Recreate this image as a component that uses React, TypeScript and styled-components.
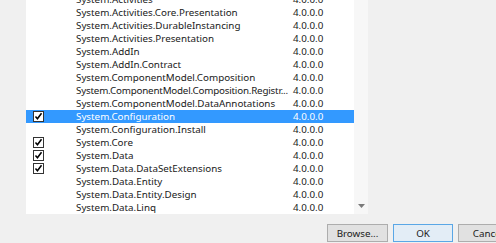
import React, { useLayoutEffect, useRef } from "react";
import styled, { createGlobalStyle } from "styled-components";

const GlobalStyle = createGlobalStyle`
  html, body {
    margin: 0;
    padding: 0;
    width: 496px;
    height: 243px;
    overflow: hidden;
    background: #f0f0f0;
    font-family: "Noto Sans", "Segoe UI", sans-serif;
  }
`;

const Page = styled.div`
  width: 496px;
  height: 243px;
  display: flex;
  flex-direction: column;
  background: #f0f0f0;
`;

const ListArea = styled.div`
  display: flex;
  padding-left: 26px;
`;

const ListBox = styled.div`
  width: 342px;
  height: 214px;
  background: #ffffff;
  display: flex;
`;

const Rows = styled.div`
  width: 328px;
  height: 214px;
  overflow: hidden;
`;

const Row = styled.div<{ $selected?: boolean }>`
  height: 13px;
  display: flex;
  align-items: center;
  background: ${(p) => (p.$selected ? "#3399ff" : "transparent")};
  color: ${(p) => (p.$selected ? "#ffffff" : "#1a1a1a")};
  font-size: 9.8px;
  line-height: 13px;
  white-space: nowrap;
`;

const CheckCell = styled.div`
  width: 50px;
  height: 13px;
  display: flex;
  align-items: center;
  padding-left: 7px;
  box-sizing: border-box;
`;

const Box = styled.div`
  width: 11px;
  height: 11px;
  box-sizing: border-box;
  border: 1px solid #333333;
  background: #ffffff;
  display: flex;
  align-items: center;
  justify-content: center;
`;

const NameCell = styled.div<{ $condensed?: boolean }>`
  width: 217px;
  overflow: hidden;
  letter-spacing: ${(p) => (p.$condensed ? "-0.2px" : "normal")};
`;

const VersionCell = styled.div`
  flex: 1;
`;

const ScrollBar = styled.div`
  width: 14px;
  height: 214px;
  background: #f7f7f7;
  display: flex;
  flex-direction: column;
  justify-content: flex-end;
  align-items: center;
  padding-bottom: 6px;
  box-sizing: border-box;
`;

const Footer = styled.div`
  display: flex;
  gap: 5px;
  padding-left: 327px;
  padding-top: 10px;
`;

const Button = styled.div<{ $default?: boolean; $w: number }>`
  flex: none;
  width: ${(p) => p.$w}px;
  height: 18px;
  box-sizing: border-box;
  border: 1px solid ${(p) => (p.$default ? "#5aa7e6" : "#adadad")};
  background: ${(p) => (p.$default ? "#e3edf6" : "#e1e1e1")};
  display: flex;
  align-items: center;
  justify-content: center;
  font-size: 9.8px;
  color: #1a1a1a;
`;

const Check = () => (
  <svg width="11" height="11" viewBox="0 0 11 11" style={{ display: "block" }}>
    <path d="M1.8 5.6 L4.2 8.2 L9.2 1.6" fill="none" stroke="#000" strokeWidth="1.9" />
  </svg>
);

const Arrow = () => (
  <svg width="7" height="4" viewBox="0 0 7 4" style={{ display: "block" }}>
    <path d="M0 0 H7 L3.5 4 Z" fill="#7a7a7a" />
  </svg>
);

type Item = { name: string; checked?: boolean; selected?: boolean; condensed?: boolean };

const items: Item[] = [
  { name: "System.Activities" },
  { name: "System.Activities.Core.Presentation" },
  { name: "System.Activities.DurableInstancing" },
  { name: "System.Activities.Presentation" },
  { name: "System.AddIn" },
  { name: "System.AddIn.Contract" },
  { name: "System.ComponentModel.Composition" },
  { name: "System.ComponentModel.Composition.Registr...", condensed: true },
  { name: "System.ComponentModel.DataAnnotations" },
  { name: "System.Configuration", checked: true, selected: true },
  { name: "System.Configuration.Install" },
  { name: "System.Core", checked: true },
  { name: "System.Data", checked: true },
  { name: "System.Data.DataSetExtensions", checked: true },
  { name: "System.Data.Entity" },
  { name: "System.Data.Entity.Design" },
  { name: "System.Data.Linq" },
];

export default function App() {
  const ref = useRef<HTMLDivElement>(null);
  useLayoutEffect(() => {
    if (ref.current) ref.current.scrollTop = 7;
  }, []);
  return (
    <>
      <GlobalStyle />
      <Page>
        <ListArea>
          <ListBox>
            <Rows ref={ref}>
              {items.map((it) => (
                <Row key={it.name} $selected={it.selected}>
                  <CheckCell>{it.checked && <Box><Check /></Box>}</CheckCell>
                  <NameCell $condensed={it.condensed}>{it.name}</NameCell>
                  <VersionCell>4.0.0.0</VersionCell>
                </Row>
              ))}
            </Rows>
            <ScrollBar>
              <Arrow />
            </ScrollBar>
          </ListBox>
        </ListArea>
        <Footer>
          <Button $w={61}>Browse...</Button>
          <Button $w={60} $default>OK</Button>
          <Button $w={60}>Cancel</Button>
        </Footer>
      </Page>
    </>
  );
}
